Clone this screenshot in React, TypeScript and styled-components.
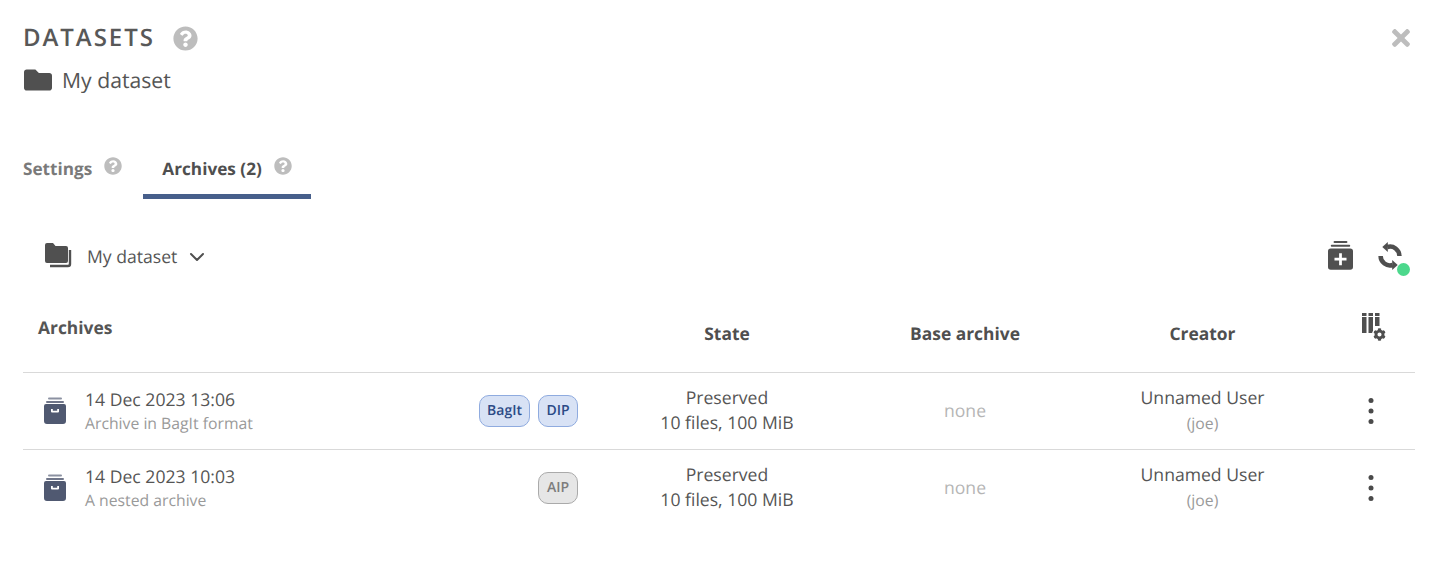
import React from "react";
import styled, { createGlobalStyle } from "styled-components";
import { FaFolder, FaQuestionCircle, FaTimes, FaCog } from "react-icons/fa";
import { ChevronDown } from "lucide-react";

const GlobalStyle = createGlobalStyle`
    html, body {
        margin: 0;
        background: #fff;
        font-family: "Open Sans", "Liberation Sans", sans-serif;
        color: #4f4f4f;
        text-rendering: geometricPrecision;
    }
`;

const Page = styled.div`
    position: relative;
    box-sizing: border-box;
    width: 1455px;
    height: 566px;
    padding: 22px 40px 0 23px;
    overflow: hidden;
`;

const TitleRow = styled.div`
    display: flex;
    align-items: center;
    justify-content: space-between;
    height: 32px;
`;

const TitleLeft = styled.div`
    display: flex;
    align-items: center;
    gap: 18px;
`;

const Title = styled.h1`
    margin: 0;
    font-size: 24px;
    line-height: 32px;
    font-weight: 600;
    letter-spacing: 1.95px;
    color: #585858;
`;

const HelpIcon = styled(FaQuestionCircle)<{ $size: number }>`
    width: ${({ $size }) => $size}px;
    height: ${({ $size }) => $size}px;
    color: #bdbdbd;
    flex: none;
`;

const CloseIcon = styled(FaTimes)`
    width: 26px;
    height: 26px;
    margin-right: 1px;
    color: #bdbdbd;
`;

const Subtitle = styled.div`
    display: flex;
    align-items: center;
    gap: 11px;
    margin-top: 11px;
    font-size: 21.2px;
    line-height: 32px;
    color: #555;
`;

const BigFolder = styled(FaFolder)`
    width: 28px;
    height: 28px;
    margin: -2px -1px 0 1px;
    color: #505050;
`;

const Tabs = styled.div`
    display: flex;
    margin-top: 49px;
    height: 57px;
`;

const Tab = styled.div<{ $active?: boolean }>`
    box-sizing: border-box;
    display: flex;
    align-items: flex-start;
    gap: 12px;
    height: 53px;
    padding: ${({ $active }) => ($active ? "7px 19px 0" : "7px 21px 0 0")};
    border-bottom: 5px solid ${({ $active }) => ($active ? "#475f8b" : "transparent")};
    font-size: 17.2px;
    line-height: 33px;
    font-weight: 700;
    color: ${({ $active }) => ($active ? "#4f4f4f" : "#7a7a7a")};

    svg {
        margin-top: 4px;
    }
`;

const Toolbar = styled.div`
    display: flex;
    align-items: center;
    justify-content: space-between;
    margin-top: 29px;
    height: 48px;
`;

const Selector = styled.div`
    display: flex;
    align-items: center;
    padding: 2px 0 0 21px;
    font-size: 17.6px;
    color: #555;
`;

const SelectorIcon = styled.svg`
    width: 28px;
    height: 26px;
    margin-right: 15px;
    margin-top: -5px;
`;

const Chevron = styled(ChevronDown)`
    width: 24px;
    height: 24px;
    margin-left: 8px;
    color: #505050;
`;

const ToolbarActions = styled.div`
    display: flex;
    align-items: center;
    gap: 23px;
    margin-right: 11px;
`;

const AddIcon = styled.svg`
    width: 25px;
    height: 30px;
    margin-top: -2px;
`;

const SyncWrap = styled.div`
    position: relative;
    width: 28px;
    height: 28px;
`;

const SyncIcon = styled.svg`
    display: block;
    width: 28px;
    height: 28px;
`;

const StatusDot = styled.span`
    position: absolute;
    right: -5.5px;
    bottom: -5.5px;
    width: 13px;
    height: 13px;
    border-radius: 50%;
    background: #4cd88c;
`;

const Row = styled.div`
    display: grid;
    grid-template-columns: 585px 238px 238px 237px 94px;
    align-items: center;
`;

const HeaderRow = styled(Row)`
    height: 78px;
    margin-top: 14px;
    border-bottom: 1px solid #d9d9d9;
    font-size: 17.4px;
    font-weight: 700;
    color: #4f4f4f;
`;

const HeaderName = styled.div`
    padding: 0 0 11px 15px;
    color: #555;
`;

const HeaderCell = styled.div`
    padding-top: 1px;
    text-align: center;
`;

const ColumnsWrap = styled.div`
    position: relative;
    width: 26px;
    height: 30px;
    margin: 0 0 0 41px;
    top: -6px;
`;

const GearIcon = styled(FaCog)`
    position: absolute;
    right: 1px;
    bottom: 0;
    width: 15px;
    height: 15px;
    padding: 1px;
    background: #fff;
    border-radius: 50%;
    box-sizing: border-box;
    color: #4f4f4f;
`;

const DataRow = styled(Row)<{ $last?: boolean }>`
    height: 76px;
    border-bottom: ${({ $last }) => ($last ? "none" : "1px solid #d9d9d9")};
`;

const NameCell = styled.div`
    display: flex;
    align-items: center;
    padding: 0 30px 0 20px;
`;

const RowIcon = styled.svg`
    width: 24px;
    height: 28px;
    flex: none;
    margin-right: 18px;
`;

const NameText = styled.div`
    flex: 1;
    padding-top: 2px;
`;

const DateText = styled.div`
    font-size: 17.6px;
    line-height: 24px;
    color: #555;
`;

const Description = styled.div`
    margin: -1px 0 1px;
    font-size: 15.75px;
    line-height: 24px;
    color: #9a9a9a;
`;

const Tags = styled.div`
    display: flex;
    gap: 8px;
`;

const Tag = styled.span<{ $variant: "blue" | "grey" }>`
    display: block;
    box-sizing: border-box;
    min-width: 40px;
    padding: 0 7px;
    height: 32px;
    line-height: 30px;
    text-align: center;
    border-radius: 10px;
    font-size: 14px;
    font-weight: 600;
    border: 1px solid ${({ $variant }) => ($variant === "blue" ? "#8fabdf" : "#aaa")};
    background: ${({ $variant }) => ($variant === "blue" ? "#d8e2f5" : "#e6e6e6")};
    color: ${({ $variant }) => ($variant === "blue" ? "#2c4a86" : "#7d7d7d")};
`;

const CenterCell = styled.div`
    text-align: center;
    font-size: 17.6px;
    line-height: 25px;
    color: #555;
`;

const MutedCell = styled(CenterCell)`
    color: #b5b5b5;
`;

const UserLogin = styled.div`
    font-size: 15.75px;
    line-height: 25px;
    color: #9a9a9a;
`;

const MoreIcon = styled.svg`
    display: block;
    width: 8px;
    height: 28px;
    margin-left: 46px;
`;

const ArchiveIcon = () => (
    <RowIcon viewBox="0 0 24 28">
        <rect x="5" y="0.5" width="14" height="2" rx="1" fill="#8b91a1" />
        <rect x="3" y="4" width="18" height="2" rx="1" fill="#6f7589" />
        <path
            fillRule="evenodd"
            d="M3 7h18a2 2 0 0 1 2 2v15a3 3 0 0 1-3 3H4a3 3 0 0 1-3-3V9a2 2 0 0 1 2-2zm5 5v2.5a1 1 0 0 0 1 1h6a1 1 0 0 0 1-1V12h-1.8v1.7H9.8V12z"
            fill="#505971"
        />
    </RowIcon>
);

const MoreButton = () => (
    <MoreIcon viewBox="0 0 8 28">
        <circle cx="4" cy="3.5" r="2.5" fill="#4a4a4a" />
        <circle cx="4" cy="14" r="2.5" fill="#4a4a4a" />
        <circle cx="4" cy="24.5" r="2.5" fill="#4a4a4a" />
    </MoreIcon>
);

const rows = [
    {
        date: "14 Dec 2023 13:06",
        description: "Archive in BagIt format",
        tags: [
            { label: "BagIt", variant: "blue" as const },
            { label: "DIP", variant: "blue" as const },
        ],
    },
    {
        date: "14 Dec 2023 10:03",
        description: "A nested archive",
        tags: [{ label: "AIP", variant: "grey" as const }],
    },
];

export default function App() {
    return (
        <Page>
            <GlobalStyle />
            <TitleRow>
                <TitleLeft>
                    <Title>DATASETS</Title>
                    <HelpIcon $size={25} />
                </TitleLeft>
                <CloseIcon />
            </TitleRow>
            <Subtitle>
                <BigFolder />
                My dataset
            </Subtitle>

            <Tabs>
                <Tab>
                    Settings
                    <HelpIcon $size={18} />
                </Tab>
                <Tab $active>
                    Archives (2)
                    <HelpIcon $size={18} />
                </Tab>
            </Tabs>

            <Toolbar>
                <Selector>
                    <SelectorIcon viewBox="0 0 28 26">
                        <path
                            d="M3 1h6l2.5 3H22a2 2 0 0 1 2 2v13a2 2 0 0 1-2 2H3a2 2 0 0 1-2-2V3a2 2 0 0 1 2-2z"
                            fill="#505050"
                        />
                        <path d="M26 8v14a2 2 0 0 1-2 2H6" fill="none" stroke="#505050" strokeWidth="2.4" />
                    </SelectorIcon>
                    My dataset
                    <Chevron />
                </Selector>
                <ToolbarActions>
                    <AddIcon viewBox="0 0 27 32">
                        <rect x="6" y="1" width="15" height="2" rx="1" fill="#505050" />
                        <rect x="3" y="5" width="21" height="2" rx="1" fill="#505050" />
                        <path
                            fillRule="evenodd"
                            d="M3 9h21a3 3 0 0 1 3 3v17a3 3 0 0 1-3 3H3a3 3 0 0 1-3-3V12a3 3 0 0 1 3-3zm9 5v5H7v3h5v5h3v-5h5v-3h-5v-5z"
                            fill="#505050"
                        />
                    </AddIcon>
                    <SyncWrap>
                        <SyncIcon viewBox="0 0 28 28">
                            <path d="M11.3 5A9.4 9.4 0 0 1 23.4 14" fill="none" stroke="#4f4f4f" strokeWidth="4.5" />
                            <path d="M6.3 5l5.5-5v10z" fill="#4f4f4f" />
                            <path d="M4.6 14A9.4 9.4 0 0 0 16.7 23" fill="none" stroke="#4f4f4f" strokeWidth="4.5" />
                            <path d="M21.7 23l-5.5 5V18z" fill="#4f4f4f" />
                        </SyncIcon>
                        <StatusDot />
                    </SyncWrap>
                </ToolbarActions>
            </Toolbar>

            <HeaderRow>
                <HeaderName>Archives</HeaderName>
                <HeaderCell>State</HeaderCell>
                <HeaderCell>Base archive</HeaderCell>
                <HeaderCell>Creator</HeaderCell>
                <ColumnsWrap>
                    <svg width="20" height="24" viewBox="0 0 20 24">
                        <rect x="0" y="1" width="4.5" height="3" fill="#4f4f4f" />
                        <rect x="6.5" y="1" width="4.5" height="3" fill="#4f4f4f" />
                        <rect x="13" y="1" width="4.5" height="3" fill="#4f4f4f" />
                        <rect x="0" y="5" width="4.5" height="16" fill="#4f4f4f" />
                        <rect x="6.5" y="5" width="4.5" height="16" fill="#4f4f4f" />
                        <rect x="13" y="5" width="4.5" height="9" fill="#4f4f4f" />
                    </svg>
                    <GearIcon />
                </ColumnsWrap>
            </HeaderRow>

            {rows.map((row, index) => (
                <DataRow key={row.date} $last={index === rows.length - 1}>
                    <NameCell>
                        <ArchiveIcon />
                        <NameText>
                            <DateText>{row.date}</DateText>
                            <Description>{row.description}</Description>
                        </NameText>
                        <Tags>
                            {row.tags.map((tag) => (
                                <Tag key={tag.label} $variant={tag.variant}>
                                    {tag.label}
                                </Tag>
                            ))}
                        </Tags>
                    </NameCell>
                    <CenterCell>
                        Preserved
                        <br />
                        10 files, 100 MiB
                    </CenterCell>
                    <MutedCell>none</MutedCell>
                    <CenterCell>
                        Unnamed User
                        <UserLogin>(joe)</UserLogin>
                    </CenterCell>
                    <MoreButton />
                </DataRow>
            ))}
        </Page>
    );
}
